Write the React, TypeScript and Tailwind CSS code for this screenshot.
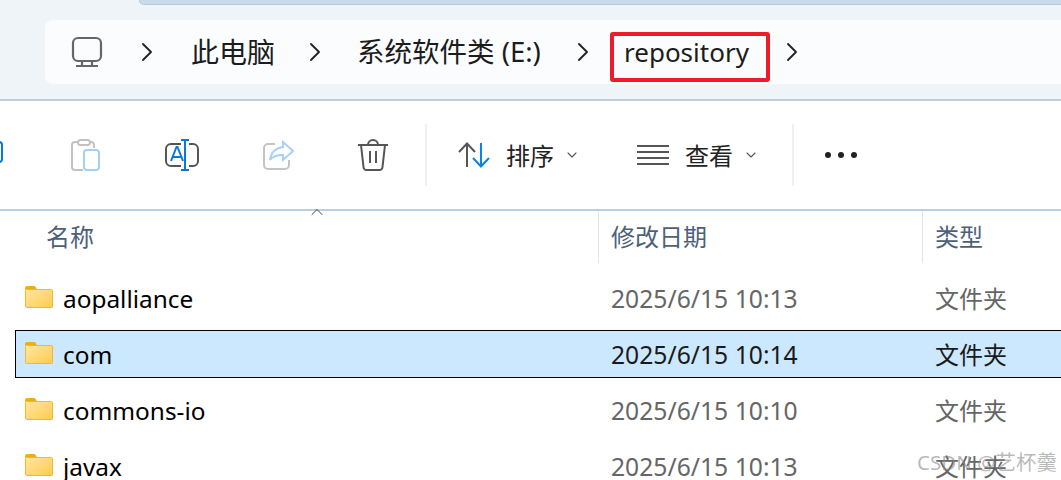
import { ChevronRight, ChevronDown, ChevronUp } from "lucide-react";

const font = "font-['Noto_Sans','Noto_Sans_CJK_SC',sans-serif]";

const files = [
  { name: "aopalliance", date: "2025/6/15 10:13", selected: false },
  { name: "com", date: "2025/6/15 10:14", selected: true },
  { name: "commons-io", date: "2025/6/15 10:10", selected: false },
  { name: "javax", date: "2025/6/15 10:13", selected: false },
];

const Sep = ({ className }: { className: string }) => (
  <ChevronRight className={`w-[32px] h-[32px] text-[#222] shrink-0 ${className}`} strokeWidth={1.4} />
);

const FolderIcon = () => (
  <svg width="28" height="23" viewBox="0 0 28 23" className="shrink-0">
    <defs>
      <linearGradient id="folderFill" x1="0" y1="0" x2="1" y2="1">
        <stop offset="0" stopColor="#ffe6a0" />
        <stop offset="1" stopColor="#ffcb4f" />
      </linearGradient>
    </defs>
    <path d="M0 3a2 2 0 0 1 2-2h7a2 2 0 0 1 1.600.8L12 4.500H0z" fill="#f5ab14" />
    <rect x="0.500" y="4.500" width="27" height="18" rx="1" fill="url(#folderFill)" stroke="#f6b62e" strokeWidth="1" />
  </svg>
);

const MonitorIcon = () => (
  <svg width="32" height="32" viewBox="0 0 32 32" fill="none" stroke="#666" strokeWidth="2.200">
    <rect x="2" y="2" width="28" height="23" rx="5" />
    <path d="M5 30h22M11 25v5M21 25v5" />
  </svg>
);

const PasteIcon = () => (
  <svg width="30" height="32" viewBox="0 0 30 32" fill="none" strokeWidth="2">
    <path d="M8 3H4a3 3 0 0 0-3 3v22a3 3 0 0 0 3 3h8M19 3h1a3 3 0 0 1 3 3v3" stroke="#c2c2c2" />
    <rect x="7" y="1" width="12" height="5" rx="2.500" stroke="#c2c2c2" />
    <rect x="13" y="11" width="15" height="20" rx="3" stroke="#a6d0f2" />
  </svg>
);

const RenameIcon = () => (
  <svg width="34" height="32" viewBox="0 0 34 32" fill="none" strokeWidth="2">
    <path d="M16 5H6a5 5 0 0 0-5 5v12a5 5 0 0 0 5 5h10M24 5h4a5 5 0 0 1 5 5v12a5 5 0 0 1-5 5h-4" stroke="#555" />
    <path d="M16 1h8M16 31h8M20 1v30" stroke="#0a78d7" />
    <path d="M6 22l5.500-14h1L18 22M8 18h8" stroke="#0a78d7" />
  </svg>
);

const ShareIcon = () => (
  <svg width="31" height="30" viewBox="0 0 31 30" fill="none" strokeWidth="2">
    <path d="M12 4H5a4 4 0 0 0-4 4v17a4 4 0 0 0 4 4h17a4 4 0 0 0 4-4v-5" stroke="#c4c4c4" />
    <path d="M20 2l10 9-10 9v-5c-6 0-10 1-13 5 1-7 5-12 13-13z" stroke="#a9d2f4" fill="#fff" />
  </svg>
);

const TrashIcon = () => (
  <svg width="30" height="32" viewBox="0 0 30 32" fill="none" stroke="#555" strokeWidth="2">
    <path d="M0 6h30M3 6l2.500 22a3 3 0 0 0 3 3h13a3 3 0 0 0 3-3L27 6M10 6a5 5 0 0 1 10 0M12 12v12M18 12v12" />
  </svg>
);

const SortIcon = () => (
  <svg width="32" height="26" viewBox="0 0 32 26" fill="none" strokeWidth="2">
    <path d="M9 25V1.500M1 10L9 1.500 17 10" stroke="#555" />
    <path d="M23 1v23.500M15 16l8 8.500L31 16" stroke="#0a84e0" />
  </svg>
);

const ViewIcon = () => (
  <svg width="32" height="20" viewBox="0 0 32 20" stroke="#555" strokeWidth="2">
    <path d="M0 1h32M0 7h32M0 13h32M0 19h32" />
  </svg>
);

const Divider = () => <div className="w-[2px] h-[62px] bg-[#f0f0f0] shrink-0" />;

export default function App() {
  return (
    <div className={`relative w-[1061px] h-[480px] overflow-hidden bg-white ${font}`}>
      {/* Address bar */}
      <div className="h-[101px] bg-[#eff4f9] border-b-2 border-[#bccfdf] text-[#1c1c1c] text-[28px]">
        <div className="ml-[139px] h-[5px] bg-[#c9dbeb] border-b border-l border-[#b5cbdf] rounded-bl-md" />
        <div className="ml-[45px] mt-[15px] h-[64px] bg-[#fbfcfe] rounded-l-lg flex items-center">
          <div className="ml-[26px]"><MonitorIcon /></div>
          <Sep className="ml-[28px]" />
          <span className="ml-[28px] leading-none whitespace-nowrap">此电脑</span>
          <Sep className="ml-[24px]" />
          <span className="ml-[26px] w-[184px] shrink-0 text-[27.5px] leading-none whitespace-nowrap">系统软件类 (E:)</span>
          <Sep className="ml-[26px]" />
          <span className="ml-[11px] mt-[10px] w-[160px] h-[50px] shrink-0 pb-[10px] pl-[10px] border-[4px] border-[#ee1c2b] rounded-[3px] flex items-center text-[26px] leading-none">
            repository
          </span>
          <Sep className="ml-[6px]" />
        </div>
      </div>

      {/* Toolbar */}
      <div className="h-[110px] border-b-2 border-[#bccfdf] flex items-center text-[24px] text-[#222]">
        <div className="ml-[71px]"><PasteIcon /></div>
        <div className="ml-[64px]"><RenameIcon /></div>
        <div className="ml-[64px]"><ShareIcon /></div>
        <div className="ml-[64px]"><TrashIcon /></div>
        <div className="ml-[37px]"><Divider /></div>
        <div className="ml-[31px]"><SortIcon /></div>
        <span className="ml-[16px] mt-[2px] leading-none">排序</span>
        <ChevronDown className="ml-[10px] w-[16px] h-[16px] text-[#555]" strokeWidth={1.6} />
        <div className="ml-[57px]"><ViewIcon /></div>
        <span className="ml-[16px] mt-[2px] leading-none">查看</span>
        <ChevronDown className="ml-[10px] w-[16px] h-[16px] text-[#555]" strokeWidth={1.6} />
        <div className="ml-[33px]"><Divider /></div>
        <div className="ml-[31px] flex gap-[7px]">
          <span className="w-[6px] h-[6px] rounded-full bg-[#222]" />
          <span className="w-[6px] h-[6px] rounded-full bg-[#222]" />
          <span className="w-[6px] h-[6px] rounded-full bg-[#222]" />
        </div>
      </div>

      {/* Column headers */}
      <div className="relative h-[52px] flex text-[24px] text-[#4c607a]">
        <div className="w-[598px] pl-[46px] flex items-center leading-none">名称</div>
        <div className="w-[324px] pl-[12px] border-l border-[#e5e5e5] flex items-center leading-none">修改日期</div>
        <div className="pl-[12px] border-l border-[#e5e5e5] flex items-center leading-none">类型</div>
        <ChevronUp className="absolute left-[307px] top-[-9px] w-[20px] h-[20px] text-[#444]" strokeWidth={1.2} />
      </div>

      {/* File rows */}
      <div className="pt-[11px] ml-[15px] flex flex-col gap-[8px]">
        {files.map((f) => (
          <div
            key={f.name}
            className={`h-[48px] flex items-center border-y border-l text-[24px] ${
              f.selected ? "bg-[#cce8ff] border-black" : "border-transparent"
            }`}
          >
            <div className="ml-[9px] -mt-[4px]"><FolderIcon /></div>
            <span className="ml-[10px] mt-[2px] w-[548px] shrink-0 text-[24.4px] text-black leading-none">{f.name}</span>
            <span className={`mt-[2px] w-[324px] shrink-0 text-[24.7px] leading-none ${f.selected ? "text-[#1a1a1a]" : "text-[#666]"}`}>{f.date}</span>
            <span className={`mt-[2px] leading-none whitespace-nowrap ${f.selected ? "text-[#1a1a1a]" : "text-[#666]"}`}>文件夹</span>
          </div>
        ))}
      </div>

      {/* Left toolbar icon clipped by the crop */}
      <div className="absolute left-[-12px] top-[141px] w-[15px] h-[22px] border-2 border-[#0a78d7] rounded-[4px]" />

      {/* Watermark */}
      <div className="absolute left-[917px] top-[447px] text-[20.5px] leading-[30px] text-[#8a8a8a]/60 whitespace-nowrap">
        CSDN @艺杯羹
      </div>
    </div>
  );
}
